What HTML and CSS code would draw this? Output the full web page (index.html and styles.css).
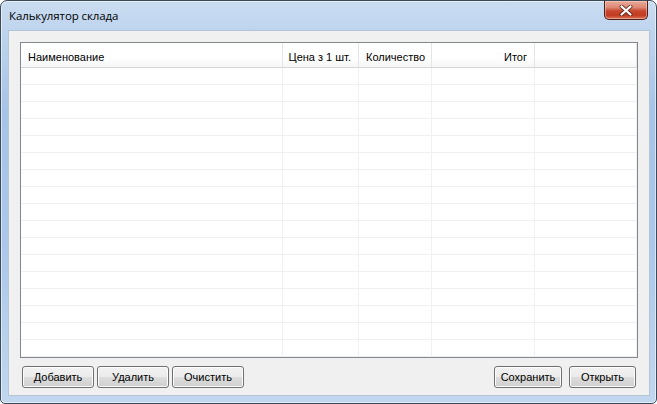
FILE: index.html
```html
<!DOCTYPE html>
<html lang="ru">
<head>
<meta charset="utf-8">
<title>Калькулятор склада</title>
<link rel="stylesheet" href="styles.css">
</head>
<body>
<div class="window">
  <div class="titlebar">
    <span class="title">Калькулятор склада</span>
    <div class="close">
      <svg width="14" height="11" viewBox="0 0 14 11">
        <path d="M2.5 1.5 L11.5 9.5 M11.5 1.5 L2.5 9.5" stroke="#4a1d14" stroke-width="4" stroke-linecap="round" fill="none" opacity="0.75"/>
        <path d="M2.5 1.5 L11.5 9.5 M11.5 1.5 L2.5 9.5" stroke="#ffffff" stroke-width="2.2" stroke-linecap="round" fill="none"/>
      </svg>
    </div>
  </div>
  <div class="client">
    <div class="listview">
      <div class="lv-header">
        <div class="hcell">Наименование</div>
        <div class="hcell right">Цена з 1 шт.</div>
        <div class="hcell">Количество</div>
        <div class="hcell right">Итог</div>
        <div class="hcell"></div>
      </div>
      <div class="lv-body">
        <div class="row"><div class="cell"></div><div class="cell"></div><div class="cell"></div><div class="cell"></div><div class="cell"></div></div>
        <div class="row"><div class="cell"></div><div class="cell"></div><div class="cell"></div><div class="cell"></div><div class="cell"></div></div>
        <div class="row"><div class="cell"></div><div class="cell"></div><div class="cell"></div><div class="cell"></div><div class="cell"></div></div>
        <div class="row"><div class="cell"></div><div class="cell"></div><div class="cell"></div><div class="cell"></div><div class="cell"></div></div>
        <div class="row"><div class="cell"></div><div class="cell"></div><div class="cell"></div><div class="cell"></div><div class="cell"></div></div>
        <div class="row"><div class="cell"></div><div class="cell"></div><div class="cell"></div><div class="cell"></div><div class="cell"></div></div>
        <div class="row"><div class="cell"></div><div class="cell"></div><div class="cell"></div><div class="cell"></div><div class="cell"></div></div>
        <div class="row"><div class="cell"></div><div class="cell"></div><div class="cell"></div><div class="cell"></div><div class="cell"></div></div>
        <div class="row"><div class="cell"></div><div class="cell"></div><div class="cell"></div><div class="cell"></div><div class="cell"></div></div>
        <div class="row"><div class="cell"></div><div class="cell"></div><div class="cell"></div><div class="cell"></div><div class="cell"></div></div>
        <div class="row"><div class="cell"></div><div class="cell"></div><div class="cell"></div><div class="cell"></div><div class="cell"></div></div>
        <div class="row"><div class="cell"></div><div class="cell"></div><div class="cell"></div><div class="cell"></div><div class="cell"></div></div>
        <div class="row"><div class="cell"></div><div class="cell"></div><div class="cell"></div><div class="cell"></div><div class="cell"></div></div>
        <div class="row"><div class="cell"></div><div class="cell"></div><div class="cell"></div><div class="cell"></div><div class="cell"></div></div>
        <div class="row"><div class="cell"></div><div class="cell"></div><div class="cell"></div><div class="cell"></div><div class="cell"></div></div>
        <div class="row"><div class="cell"></div><div class="cell"></div><div class="cell"></div><div class="cell"></div><div class="cell"></div></div>
        <div class="row"><div class="cell"></div><div class="cell"></div><div class="cell"></div><div class="cell"></div><div class="cell"></div></div>
      </div>
    </div>
    <div class="buttons">
      <div class="group left">
        <button class="btn">Добавить</button>
        <button class="btn">Удалить</button>
        <button class="btn">Очистить</button>
      </div>
      <div class="group right">
        <button class="btn w1">Сохранить</button>
        <button class="btn w2">Открыть</button>
      </div>
    </div>
  </div>
</div>
</body>
</html>
```
FILE: styles.css
```css
* { box-sizing: border-box; }
html, body { margin: 0; padding: 0; background: #ffffff; }
body { width: 657px; height: 404px; overflow: hidden; }

.window {
  width: 657px;
  height: 404px;
  border: 1px solid #3c4a5a;
  border-radius: 7px 7px 5px 5px;
  background: linear-gradient(to bottom, #cadcf1 0px, #bfd5ee 28px, #a6c4e7 110px, #abc8ea 250px, #c2d7ef 404px);
  box-shadow: inset 0 0 0 1px rgba(255,255,255,0.55);
  display: flex;
  flex-direction: column;
  font-family: "Liberation Sans", Arial, sans-serif;
}

.titlebar {
  height: 29px;
  display: flex;
  justify-content: space-between;
  align-items: flex-start;
  padding: 0 8px 0 8px;
}
.title {
  font-family: "Open Sans", "Noto Sans", sans-serif;
  font-size: 11.5px;
  color: #000;
  margin-top: 7px;
  letter-spacing: -0.1px;
}
.close {
  width: 44px;
  height: 20px;
  margin-top: -1px;
  border: 1px solid #4b2219;
  border-top-color: #3c4a5a;
  border-radius: 0 0 5px 5px;
  background: linear-gradient(to bottom, #e9aa9b 0%, #dd8a77 35%, #c8472d 55%, #c23d22 80%, #d9755a 100%);
  box-shadow: inset 0 0 0 1px rgba(255,220,210,0.45);
  display: flex;
  align-items: center;
  justify-content: center;
}

.client {
  flex: 1;
  margin: 0 6px 7px 7px;
  border: 1px solid #b6c5d6;
  background: #f0f0f0;
  padding: 11px 11px 7px 11px;
  display: flex;
  flex-direction: column;
}

.listview {
  height: 316px;
  border: 1px solid #828790;
  background: #ffffff;
  display: flex;
  flex-direction: column;
  overflow: hidden;
}
.lv-header, .row {
  display: grid;
  grid-template-columns: 262px 76px 73px 103px 1fr;
}
.lv-header {
  height: 25px;
  border-bottom: 1px solid #d5d5d5;
  background: linear-gradient(to bottom, #ffffff 0%, #ffffff 60%, #f5f6f7 100%);
}
.hcell {
  border-right: 1px solid #e3e5e8;
  font-size: 11px;
  color: #000;
  line-height: 24px;
  padding: 2px 7px 0 7px;
  white-space: nowrap;
  overflow: hidden;
}
.hcell.right { text-align: right; padding-right: 7px; padding-left: 2px; }

.lv-body { flex: 1; }
.row {
  height: 17px;
  border-bottom: 1px solid #f0f0f0;
}
.cell { border-right: 1px solid #f0f0f0; }

.buttons {
  margin-top: 8px;
  display: flex;
  justify-content: space-between;
  padding: 0 2px 0 2px;
}
.group { display: flex; }
.group.left { gap: 3px; }
.group.right { gap: 7px; }

.btn {
  width: 72px;
  height: 22px;
  padding: 0;
  border: 1px solid #707070;
  border-radius: 3px;
  background: linear-gradient(to bottom, #f2f2f2 0%, #ebebeb 50%, #dddddd 51%, #cfcfcf 100%);
  box-shadow: inset 0 0 0 1px #fcfcfc;
  font-family: "Liberation Sans", Arial, sans-serif;
  font-size: 11px;
  color: #000;
  line-height: 20px;
}
.btn.w1 { width: 68px; }
.btn.w2 { width: 67px; }
```
